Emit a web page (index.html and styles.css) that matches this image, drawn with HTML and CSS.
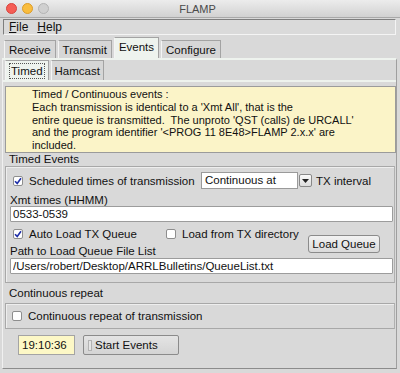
FILE: index.html
```html
<!DOCTYPE html>
<html lang="en">
<head>
    <meta charset="UTF-8">
    <title>FLAMP</title>
    <link rel="stylesheet" href="styles.css">
</head>
<body>
    <div class="window">
        <div class="titlebar">
            <div class="lights">
                <span class="light red"></span>
                <span class="light yellow"></span>
                <span class="light grey"></span>
            </div>
            <div class="title">FLAMP</div>
        </div>
        <div class="menubar">
            <div class="menu">
                <span class="menu-item"><u>F</u>ile</span>
                <span class="menu-item"><u>H</u>elp</span>
            </div>
        </div>
        <div class="tabs">
            <div class="tab">Receive</div>
            <div class="tab">Transmit</div>
            <div class="tab active">Events</div>
            <div class="tab">Configure</div>
        </div>
        <div class="panel">
            <div class="subtabs">
                <div class="subtab active"><span class="focus">Timed</span></div>
                <div class="subtab">Hamcast</div>
            </div>
            <div class="subpanel">
                <div class="note">
                    Timed / Continuous events :<br>
                    Each transmission is identical to a 'Xmt All', that is the<br>
                    entire queue is transmitted.&nbsp; The unproto 'QST (calls) de URCALL'<br>
                    and the program identifier '&lt;PROG 11 8E48&gt;FLAMP 2.x.x' are<br>
                    included.
                </div>

                <div class="group-label">Timed Events</div>
                <div class="group">
                    <div class="row first-row">
                        <label class="check-label sched">
                            <span class="check"><svg width="8" height="8" viewBox="0 0 8 8"><path d="M1 4.2 L3.2 6.4 L7 1.2" fill="none" stroke="#1f2fa8" stroke-width="1.6"/></svg></span>
                            Scheduled times of transmission
                        </label>
                        <div class="choice">Continuous at</div>
                        <div class="choice-btn"><svg width="7" height="4" viewBox="0 0 7 4"><path d="M0 0 L7 0 L3.5 4 Z" fill="#222"/></svg></div>
                        <span class="after-choice">TX interval</span>
                    </div>
                    <div class="field-label">Xmt times (HHMM)</div>
                    <input class="text-input" type="text" value="0533-0539">
                    <div class="row load-row">
                        <div class="load-left">
                            <div class="row checks-row">
                                <label class="check-label auto">
                                    <span class="check"><svg width="8" height="8" viewBox="0 0 8 8"><path d="M1 4.2 L3.2 6.4 L7 1.2" fill="none" stroke="#1f2fa8" stroke-width="1.6"/></svg></span>
                                    Auto Load TX Queue
                                </label>
                                <label class="check-label">
                                    <span class="check"></span>
                                    Load from TX directory
                                </label>
                            </div>
                            <div class="field-label path-label">Path to Load Queue File List</div>
                        </div>
                        <button class="btn load-btn">Load Queue</button>
                    </div>
                    <input class="text-input" type="text" value="/Users/robert/Desktop/ARRLBulletins/QueueList.txt">
                </div>

                <div class="group-label repeat-label">Continuous repeat</div>
                <div class="group repeat">
                    <label class="check-label">
                        <span class="check"></span>
                        Continuous repeat of transmission
                    </label>
                </div>

                <div class="footer">
                    <div class="clock">19:10:36</div>
                    <button class="btn start-btn"><span class="lamp"></span>Start Events</button>
                </div>
            </div>
        </div>
    </div>
</body>
</html>
```

FILE: styles.css
```css
* {
    box-sizing: border-box;
}

body {
    margin: 0;
    font-family: "Liberation Sans", Arial, sans-serif;
    font-size: 11px;
    color: #111;
    background: #e6e6e6;
}

.window {
    width: 400px;
    height: 373px;
    display: flex;
    flex-direction: column;
    background: #d9d9d9;
}

/* title bar */
.titlebar {
    height: 18px;
    display: flex;
    align-items: center;
    background: linear-gradient(#ececec, #d2d2d2);
    border-bottom: 1px solid #a9a9a9;
}

.lights {
    display: flex;
    gap: 5px;
    padding-left: 6px;
}

.light {
    width: 11px;
    height: 11px;
    border-radius: 50%;
}

.light.red {
    background: #f55d55;
    border: 1px solid #d8443e;
}

.light.yellow {
    background: #f9bd3e;
    border: 1px solid #dc9c2a;
}

.light.grey {
    background: #d0d0d0;
    border: 1px solid #b4b4b4;
}

.title {
    flex: 1;
    text-align: center;
    color: #4a4a4a;
    font-size: 11px;
    margin-left: -54px;
}

/* menu */
.menubar {
    padding: 1px 4px 3px 3px;
}

.menu {
    height: 16px;
    display: flex;
    align-items: center;
    gap: 9px;
    padding-left: 5px;
    border: 1px solid;
    border-color: #7e7e7e #f4f4f4 #f4f4f4 #7e7e7e;
    background: #dadada;
    font-size: 12px;
}

/* main tabs */
.tabs {
    display: flex;
    align-items: flex-end;
    gap: 2px;
    height: 20px;
    padding-left: 4px;
}

.tab {
    height: 18px;
    padding: 0 4px;
    display: flex;
    align-items: center;
    border: 1px solid #a3a3a3;
    border-bottom: none;
    border-left-color: #f4f4f4;
    background: #d6d6d6;
    font-size: 11.5px;
}

.tab.active {
    height: 21px;
    background: #eef3ee;
    padding-bottom: 2px;
}

.panel {
    flex: 1;
    margin: 0 3px 4px 2px;
    border-top: 2px solid #eef3ee;
    border-right: 1px solid #9f9f9f;
    border-bottom: 1px solid #8c8c8c;
    border-left: 1px solid #f0f0f0;
    display: flex;
    flex-direction: column;
}

/* sub tabs */
.subtabs {
    display: flex;
    align-items: flex-end;
    gap: 2px;
    height: 20px;
    padding-left: 2px;
}

.subtab {
    height: 20px;
    padding: 0 3px;
    display: flex;
    align-items: center;
    border: 1px solid #a3a3a3;
    border-bottom: none;
    border-left-color: #f4f4f4;
    background: #d6d6d6;
    font-size: 11.5px;
}

.subtab.active {
    background: #eef3ee;
}

.focus {
    border: 1px dotted #555;
    padding: 1px 1px;
}

.subpanel {
    flex: 1;
    border-top: 2px solid #eef3ee;
    padding: 4px 0 0 2px;
    display: flex;
    flex-direction: column;
}

/* yellow notice */
.note {
    height: 67px;
    background: #fbf4c8;
    border: 1px solid #9b9b9b;
    padding: 1px 0 0 26px;
    line-height: 12.8px;
    font-size: 11px;
}

.group-label {
    height: 13px;
    line-height: 13px;
    padding-left: 4px;
    font-size: 11.5px;
}

.group {
    height: 117px;
    margin-right: 1px;
    border: 1px solid #a8a8a8;
    border-right-color: #b0b0b0;
    box-shadow: inset 1px 1px 0 #eeeeee;
    padding: 5px 1px 0 4px;
    display: flex;
    flex-direction: column;
}

.row {
    display: flex;
    align-items: center;
}

.first-row {
    height: 17px;
}

.check-label {
    display: flex;
    align-items: center;
    gap: 6px;
    font-size: 11.5px;
}

.sched {
    flex: 0 0 191px;
    padding-left: 3px;
}

.check {
    width: 10px;
    height: 10px;
    border: 1px solid #8e8e8e;
    border-radius: 2px;
    background: #fff;
    display: flex;
    align-items: center;
    justify-content: center;
}

.choice {
    width: 97px;
    height: 17px;
    border: 1px solid #9a9a9a;
    background: #fff;
    padding-left: 3px;
    line-height: 15px;
    font-size: 11.5px;
}

.choice-btn {
    width: 13px;
    height: 13px;
    margin-left: 1px;
    border: 1px solid #888;
    border-radius: 2px;
    background: linear-gradient(#fafafa, #dcdcdc);
    display: flex;
    align-items: center;
    justify-content: center;
}

.after-choice {
    margin-left: 4px;
    font-size: 11.5px;
}

.field-label {
    margin-top: 5px;
    height: 12px;
    line-height: 12px;
    font-size: 11.5px;
}

.text-input {
    height: 16px;
    width: 100%;
    margin: 0;
    border: 1px solid #9c9c9c;
    background: #fff;
    padding: 0 2px;
    font-family: "Liberation Sans", Arial, sans-serif;
    font-size: 11.5px;
    color: #111;
    border-radius: 1px;
}

.load-row {
    align-items: flex-end;
    justify-content: space-between;
}

.load-left {
    display: flex;
    flex-direction: column;
}

.checks-row {
    height: 16px;
    margin-top: 4px;
    gap: 0;
}

.auto {
    flex: 0 0 156px;
    padding-left: 3px;
}

.path-label {
    margin-top: 3px;
    margin-bottom: 1px;
}

.btn {
    height: 18px;
    border: 1px solid #8b8b8b;
    border-radius: 3px;
    background: linear-gradient(#f2f2f2, #dadada);
    font-family: "Liberation Sans", Arial, sans-serif;
    font-size: 11.5px;
    color: #111;
    padding: 0 4px;
    white-space: nowrap;
}

.load-btn {
    width: 72px;
    padding: 0 2px;
    margin: 0 13px 5px 0;
}

.repeat-label {
    height: 19px;
    line-height: 19px;
    margin-top: 1px;
}

.group.repeat {
    height: 26px;
    padding: 0 0 0 6px;
    justify-content: center;
}

.footer {
    flex: 1;
    display: flex;
    align-items: flex-start;
    padding: 6px 0 0 13px;
    gap: 8px;
}

.clock {
    width: 57px;
    height: 20px;
    background: #fdf8c6;
    border: 1px solid #a4a4a4;
    line-height: 18px;
    padding-left: 3px;
    font-size: 11.5px;
}

.start-btn {
    width: 96px;
    height: 20px;
    display: flex;
    align-items: center;
    gap: 3px;
    border-radius: 2px;
    background: linear-gradient(#e4e4e4, #d4d4d4);
}

.lamp {
    width: 4px;
    height: 11px;
    border: 1px solid #b3b3b3;
    background: #e6e6e6;
}
```
